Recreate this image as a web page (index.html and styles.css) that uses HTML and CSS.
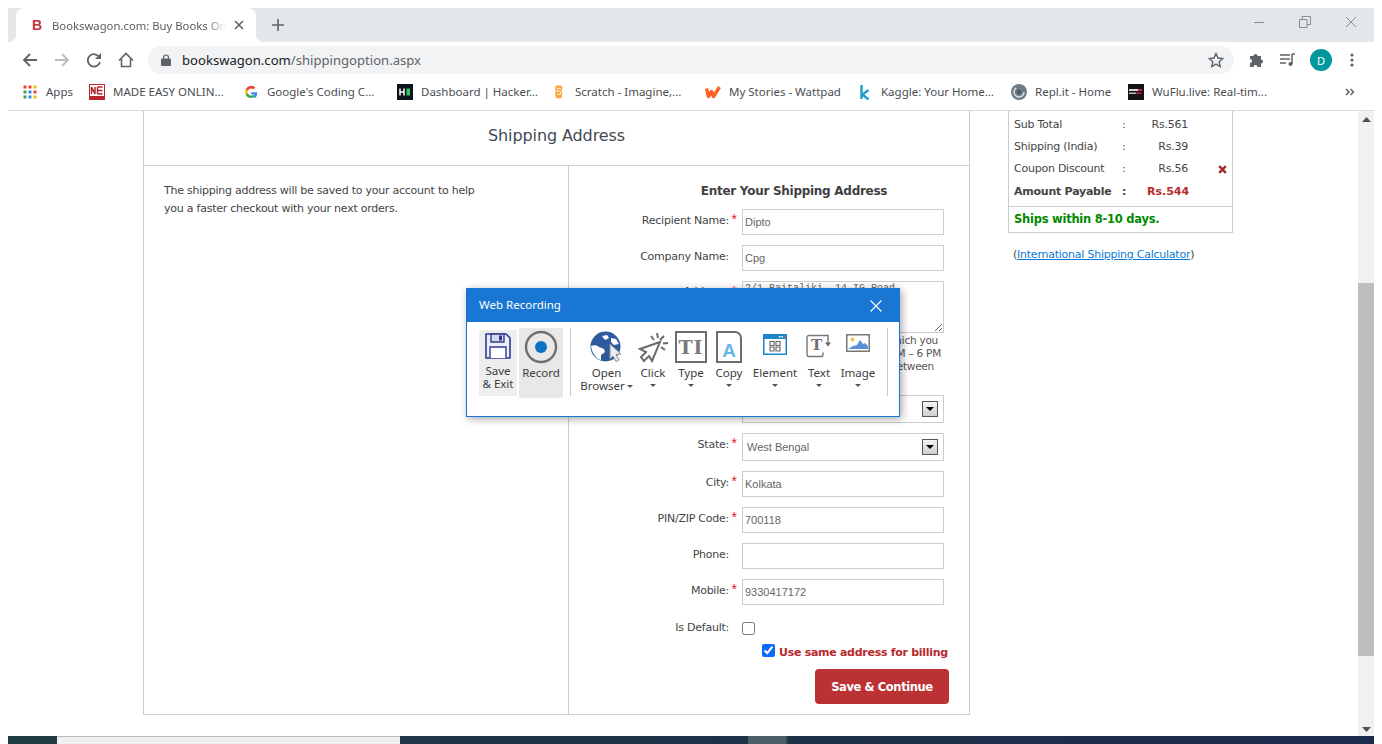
FILE: index.html
```html
<!DOCTYPE html>
<html>
<head>
    <title>Bookswagon.com: Buy Books Online</title>
    <link rel="stylesheet" href="styles.css">
</head>
<body>
    <div class="tab-strip">
        <div class="tab">
            <span class="tab-icon">B</span>
            <span class="tab-title">Bookswagon.com: Buy Books Online</span>
            <svg class="tab-close" width="10" height="10" viewBox="0 0 10 10"><path d="M1 1l8 8M9 1l-8 8" stroke="#5f6368" stroke-width="1.6"/></svg>
        </div>
        <svg class="new-tab" width="12" height="12" viewBox="0 0 12 12"><path d="M6 0v12M0 6h12" stroke="#5f6368" stroke-width="1.6"/></svg>
        <div class="window-controls">
            <svg width="12" height="12" viewBox="0 0 12 12"><path d="M1 6.500h10" stroke="#8a8d90"/></svg>
            <svg width="12" height="12" viewBox="0 0 12 12"><path d="M.5 3.500h7.500v8h-7.500zM3 3.500v-3h8.500v8h-3.500" fill="none" stroke="#8a8d90"/></svg>
            <svg width="12" height="12" viewBox="0 0 12 12"><path d="M1 1l10 10M11 1l-10 10" stroke="#8a8d90"/></svg>
        </div>
    </div>

    <div class="toolbar">
        <svg class="nav-icon" width="16" height="16" viewBox="0 0 16 16"><path d="M15 8H2M8 2L2 8l6 6" fill="none" stroke="#5f6368" stroke-width="1.800"/></svg>
        <svg class="nav-icon" width="16" height="16" viewBox="0 0 16 16"><path d="M1 8h13M8 2l6 6-6 6" fill="none" stroke="#b9bcbf" stroke-width="1.800"/></svg>
        <svg class="nav-icon" width="16" height="16" viewBox="0 0 16 16"><path d="M13.500 5.500A6.200 6.200 0 1 0 14 10" fill="none" stroke="#5f6368" stroke-width="1.800"/><path d="M15 1v6H9z" fill="#5f6368"/></svg>
        <svg class="nav-icon" width="16" height="16" viewBox="0 0 16 16"><path d="M1 8.500L8 1.500l7 7M3.500 7v7.500h9V7" fill="none" stroke="#5f6368" stroke-width="1.600"/></svg>
        <div class="omnibox">
            <svg width="10" height="12" viewBox="0 0 10 12"><path d="M2.500 5V3.500a2.500 2.500 0 0 1 5 0V5" fill="none" stroke="#5f6368" stroke-width="1.200"/><rect y="4.500" width="10" height="7.500" rx="1" fill="#5f6368"/></svg>
            <span class="url">bookswagon.com<span class="url-path">/shippingoption.aspx</span></span>
            <svg class="star" width="16" height="16" viewBox="0 0 16 16"><path d="M8 1.500l2 4.500 4.800.5-3.600 3.200 1 4.800L8 12.100l-4.200 2.400 1-4.800L1.200 6.500 6 6z" fill="none" stroke="#5f6368" stroke-width="1.400"/></svg>
        </div>
        <svg class="puzzle" width="16" height="16" viewBox="0 0 16 16"><path d="M1 5h3.500a2 2 0 1 1 4 0H12v3.500a2 2 0 1 1 0 4V16H8.500a2 2 0 1 0-4 0H1v-4a2 2 0 1 0 0-4z" fill="#5f6368" transform="translate(0 -1)"/></svg>
        <svg class="queue" width="16" height="14" viewBox="0 0 16 14"><path d="M0 2h10M0 6h10M0 10h6" stroke="#5f6368" stroke-width="1.400"/><path d="M12 1h3M12 1v10" stroke="#5f6368" stroke-width="1.500"/><circle cx="10.500" cy="11" r="2" fill="#5f6368"/></svg>
        <span class="avatar">D</span>
        <svg class="dots" width="4" height="14" viewBox="0 0 4 14"><circle cx="2" cy="2" r="1.600" fill="#5f6368"/><circle cx="2" cy="7" r="1.600" fill="#5f6368"/><circle cx="2" cy="12" r="1.600" fill="#5f6368"/></svg>
    </div>

    <div class="bookmarks">
        <div class="bookmark">
            <svg width="16" height="16" viewBox="0 0 16 16">
                <rect x="1.500" y="1.500" width="3" height="3" fill="#ea4335"/><rect x="6.500" y="1.500" width="3" height="3" fill="#ea4335"/><rect x="11.500" y="1.500" width="3" height="3" fill="#fbbc05"/>
                <rect x="1.500" y="6.500" width="3" height="3" fill="#34a853"/><rect x="6.500" y="6.500" width="3" height="3" fill="#4285f4"/><rect x="11.500" y="6.500" width="3" height="3" fill="#ea4335"/>
                <rect x="1.500" y="11.500" width="3" height="3" fill="#34a853"/><rect x="6.500" y="11.500" width="3" height="3" fill="#4285f4"/><rect x="11.500" y="11.500" width="3" height="3" fill="#fbbc05"/>
            </svg>
            <span>Apps</span>
        </div>
        <div class="bookmark">
            <svg width="16" height="16" viewBox="0 0 16 16"><rect width="16" height="16" fill="#b5262c"/><rect x="1" y="1" width="14" height="11" fill="#fff"/><path d="M2.500 10V3l3.500 7V3M8.500 3h5M8.500 6.500h5M8.500 10h5M8.500 3v7" fill="none" stroke="#b5262c" stroke-width="1.500"/></svg>
            <span>MADE EASY ONLIN...</span>
        </div>
        <div class="bookmark">
            <svg width="16" height="16" viewBox="0 0 16 16">
                <path d="M14 8.200H8.200v2.300h3.300a3.500 3.500 0 0 1-1.300 1.900l2 1.600A6 6 0 0 0 14 8.200z" fill="#4285f4"/>
                <path d="M8.200 14a5.800 5.800 0 0 0 4-1.400l-2-1.600a3.600 3.600 0 0 1-5.400-1.900l-2.100 1.600A6 6 0 0 0 8.200 14z" fill="#34a853"/>
                <path d="M4.800 9.100a3.600 3.600 0 0 1 0-2.300L2.700 5.200a6 6 0 0 0 0 5.500z" fill="#fbbc05"/>
                <path d="M8.200 4.400a3.300 3.300 0 0 1 2.300.9l1.800-1.800A6 6 0 0 0 2.700 5.200l2.100 1.600a3.600 3.600 0 0 1 3.400-2.400z" fill="#ea4335"/>
            </svg>
            <span>Google's Coding C...</span>
        </div>
        <div class="bookmark">
            <svg width="16" height="16" viewBox="0 0 16 16"><rect width="16" height="16" fill="#0e141e"/><path d="M3 4.500v7M7 4.500v7M3 8h4" stroke="#fff" stroke-width="1.500"/><rect x="9.500" y="4.500" width="3.500" height="7" fill="#2ec866"/></svg>
            <span>Dashboard | Hacker...</span>
        </div>
        <div class="bookmark">
            <svg width="16" height="16" viewBox="0 0 16 16"><path d="M5 1.500h5.500l1 2.500-.8 2.500.8 3-1 4.500-3 .5-2.500-.5-1-3.500.8-3-.8-3z" fill="#f9a83c"/><path d="M10 4.500H6.500v3h3v3H6" fill="none" stroke="#fde2b6" stroke-width="1.200"/></svg>
            <span>Scratch - Imagine,...</span>
        </div>
        <div class="bookmark">
            <svg width="16" height="16" viewBox="0 0 16 16"><path d="M1.500 4.500l2 8 3-5 2 5 6-9.500" fill="none" stroke="#ff6122" stroke-width="3.400" stroke-linejoin="round"/></svg>
            <span>My Stories - Wattpad</span>
        </div>
        <div class="bookmark">
            <svg width="16" height="16" viewBox="0 0 16 16"><path d="M4.500 1v14M11.500 6L5.500 10.500l6 5" fill="none" stroke="#1f9ccd" stroke-width="2.400"/></svg>
            <span>Kaggle: Your Home...</span>
        </div>
        <div class="bookmark">
            <svg width="16" height="16" viewBox="0 0 16 16"><circle cx="8" cy="8" r="8" fill="#6e7b82"/><circle cx="8" cy="8" r="5" fill="none" stroke="#dfe3e5" stroke-width="1.500" stroke-dasharray="20 12"/><circle cx="8" cy="8" r="2.300" fill="#4e5a61"/></svg>
            <span>Repl.it - Home</span>
        </div>
        <div class="bookmark">
            <svg width="16" height="16" viewBox="0 0 16 16"><rect width="16" height="16" fill="#17111c"/><rect x="1" y="5" width="9" height="2" fill="#d8d8d8"/><rect x="10" y="5" width="4" height="2" fill="#c0303a"/><rect x="1" y="8.500" width="7" height="1.500" fill="#bdbdbd"/><rect x="8" y="8.500" width="5" height="1.500" fill="#b0303a"/></svg>
            <span>WuFlu.live: Real-tim...</span>
        </div>
        <svg class="more" width="10" height="8" viewBox="0 0 10 8"><path d="M1 1l3 3-3 3M5.500 1l3 3-3 3" fill="none" stroke="#5f6368" stroke-width="1.500"/></svg>
    </div>

    <div class="viewport">
        <div class="page">
            <div class="panel">
                <h2 class="panel-title">Shipping Address</h2>
                <div class="panel-body">
                    <div class="note">
                        The shipping address will be saved to your account to help<br>
                        you a faster checkout with your next orders.
                    </div>
                    <div class="address-form">
                        <h3 class="form-title">Enter Your Shipping Address</h3>
                        <div class="row">
                            <label>Recipient Name:</label><span class="req">*</span>
                            <input class="field" type="text" value="Dipto">
                        </div>
                        <div class="row">
                            <label>Company Name:</label><span class="req"></span>
                            <input class="field" type="text" value="Cpg">
                        </div>
                        <div class="row row-tight">
                            <label>Address:</label><span class="req">*</span>
                            <textarea class="field area">2/1 Baitaliki, 14 IG Road</textarea>
                        </div>
                        <p class="hint">
                            <span>Please give an address at which you</span>
                            <span>can take delivery from 10 AM – 6 PM</span>
                            <span>on any working day in between</span>
                        </p>
                        <div class="row">
                            <label>Country:</label><span class="req">*</span>
                            <div class="select"><span>India</span><b class="select-btn"></b></div>
                        </div>
                        <div class="row">
                            <label>State:</label><span class="req">*</span>
                            <div class="select"><span>West Bengal</span><b class="select-btn"></b></div>
                        </div>
                        <div class="row">
                            <label>City:</label><span class="req">*</span>
                            <input class="field" type="text" value="Kolkata">
                        </div>
                        <div class="row">
                            <label>PIN/ZIP Code:</label><span class="req">*</span>
                            <input class="field" type="text" value="700118">
                        </div>
                        <div class="row">
                            <label>Phone:</label><span class="req"></span>
                            <input class="field" type="text">
                        </div>
                        <div class="row">
                            <label>Mobile:</label><span class="req">*</span>
                            <input class="field" type="text" value="9330417172">
                        </div>
                        <div class="row row-check">
                            <label>Is Default:</label><span class="req"></span>
                            <input class="check" type="checkbox">
                        </div>
                        <div class="billing">
                            <input class="check" type="checkbox" checked>
                            <span>Use same address for billing</span>
                        </div>
                        <div class="actions">
                            <button class="save-btn">Save &amp; Continue</button>
                        </div>
                    </div>
                </div>
            </div>

            <div class="sidebar">
                <div class="summary">
                    <div class="totals">
                        <span>Sub Total</span><span>:</span><span class="amount">Rs.561</span><span></span>
                        <span>Shipping (India)</span><span>:</span><span class="amount">Rs.39</span><span></span>
                        <span>Coupon Discount</span><span>:</span><span class="amount">Rs.56</span>
                        <svg class="remove" width="9" height="9" viewBox="0 0 9 9"><path d="M1.200 1.200l6.600 6.600M7.800 1.200L1.200 7.800" stroke="#a5282c" stroke-width="2.400"/></svg>
                        <strong>Amount Payable</strong><strong>:</strong><strong class="amount payable">Rs.544</strong><span></span>
                    </div>
                    <div class="ships">Ships within 8-10 days.</div>
                </div>
                <p class="calc">(<a href="#">International Shipping Calculator</a>)</p>
            </div>
        </div>

        <div class="scrollbar">
            <svg width="9" height="5" viewBox="0 0 9 5"><path d="M4.500 0l4.500 5H0z" fill="#505050"/></svg>
            <div class="thumb"></div>
            <svg width="9" height="5" viewBox="0 0 9 5"><path d="M0 0h9L4.500 5z" fill="#505050"/></svg>
        </div>

        <div class="recorder">
            <div class="recorder-head">
                <span>Web Recording</span>
                <svg width="12" height="12" viewBox="0 0 12 12"><path d="M.5.500l11 11M11.500.500l-11 11" stroke="#fff" stroke-width="1.100"/></svg>
            </div>
            <div class="recorder-tools">
                <div class="tool tool-save">
                    <svg width="26" height="26" viewBox="0 0 26 26"><path d="M1 1h20l4 4v20H1z" fill="#eceef8" stroke="#2f3a8f" stroke-width="1.600"/><path d="M6 1h13v8H6z" fill="#d5d9ee" stroke="#2f3a8f" stroke-width="1.400"/><rect x="14" y="2.500" width="3" height="5" fill="#2f3a8f"/><path d="M5 25V14h16v11" fill="#fff" stroke="#2f3a8f" stroke-width="1.400"/></svg>
                    <span>Save<br>&amp; Exit</span>
                </div>
                <div class="tool tool-record">
                    <svg width="34" height="34" viewBox="0 0 34 34"><circle cx="17" cy="17" r="15" fill="none" stroke="#6f6f6f" stroke-width="2.400"/><circle cx="17" cy="17" r="6" fill="#0a72c4"/></svg>
                    <span>Record</span>
                </div>
                <div class="tool-sep"></div>
                <div class="tool tool-open">
                    <svg width="34" height="32" viewBox="0 0 34 32">
                        <circle cx="15.500" cy="15.500" r="15" fill="#2f5a9e"/>
                        <path d="M1 15c3-1 6-1 8 1l5 2 1 3-4 3v5c-5-1-9-7-10-14zM12 5l5-1 2 3-4 2zM21 7l5 1 3 5-5 1-3-3z" fill="#fff"/>
                        <path d="M20 13l11 10-5 .5 3 5.500-3 1.500-3-5.500-3 3z" fill="#e9ecef" stroke="#8a8f94"/>
                    </svg>
                    <span>Open<br>Browser<i class="caret caret-inline"></i></span>
                </div>
                <div class="tool tool-click">
                    <svg width="32" height="32" viewBox="0 0 32 32"><path d="M22 12L2 19l6 3-5 5 3 4 5-5 3 5z" fill="#fff" stroke="#6b6b6b" stroke-width="2" transform="translate(1 -1)"/><path d="M20 2l1 5M27 5l-4 4M31 12l-5 .5M14 5l3 4M28 19l-4-3" stroke="#6b6b6b" stroke-width="2"/></svg>
                    <span>Click</span><i class="caret"></i>
                </div>
                <div class="tool tool-type">
                    <div class="type-box">TI</div>
                    <span>Type</span><i class="caret"></i>
                </div>
                <div class="tool tool-copy">
                    <div class="copy-doc">A</div>
                    <span>Copy</span><i class="caret"></i>
                </div>
                <div class="tool tool-element">
                    <svg class="icon-low" width="24" height="21" viewBox="0 0 24 21"><rect width="24" height="21" fill="#1b86c8"/><rect x="1.500" y="5" width="21" height="14.500" fill="#fff"/><rect x="16" y="2" width="1.500" height="1.500" fill="#fff"/><rect x="18.500" y="2" width="1.500" height="1.500" fill="#fff"/><rect x="21" y="2" width="1.500" height="1.500" fill="#e9546b"/><path d="M7 7.500h4v4H7zM13 7.500h4v4h-4zM7 13h4v4H7zM13 13h4v4h-4z" fill="none" stroke="#6b6b6b" stroke-width="1.200"/></svg>
                    <span>Element</span><i class="caret"></i>
                </div>
                <div class="tool tool-text">
                    <div class="text-icon">
                        <svg width="26" height="24" viewBox="0 0 26 24"><path d="M15 1.500H3a2 2 0 0 0-2 2v17a2 2 0 0 0 2 2h12a2 2 0 0 0 2-2v-2" fill="none" stroke="#777" stroke-width="1.400"/><path d="M15 1.500h7V9" fill="none" stroke="#777" stroke-width="1.400"/><path d="M19 8.500h6l-3 4z" fill="#666"/></svg>
                        <span class="text-t">T</span>
                    </div>
                    <span>Text</span><i class="caret"></i>
                </div>
                <div class="tool tool-image">
                    <svg class="icon-low" width="24" height="18" viewBox="0 0 24 18"><rect x=".75" y=".75" width="22.500" height="16.500" fill="#fff" stroke="#777" stroke-width="1.500"/><circle cx="6.500" cy="5.500" r="2" fill="#f2c14e"/><path d="M2 15l5-3 4-1 3-5 3 4 2-1 3 3v3z" fill="#5b8fd3"/></svg>
                    <span>Image</span><i class="caret"></i>
                </div>
                <div class="tool-sep tool-sep-end"></div>
            </div>
        </div>
    </div>

    <div class="taskbar">
        <div class="task-start"></div>
        <div class="task-search"></div>
        <div class="task-gap"></div>
        <div class="task-active"></div>
        <div class="task-clock"><span>THU</span><span>9:53 AM</span></div>
    </div>
</body>
</html>
```

FILE: styles.css
```css
html {
    background: #fff;
}

body {
    margin: 8px 8px 0;
    height: 736px;
    overflow: hidden;
    font-family: "Noto Sans", "Open Sans", sans-serif;
    color: #3c4043;
    display: flex;
    flex-direction: column;
}

/* browser chrome */
.tab-strip {
    height: 34px;
    flex: none;
    background: #e4e7ea;
    display: flex;
    align-items: center;
    padding-left: 8px;
}

.tab {
    position: relative;
    width: 240px;
    height: 34px;
    background: #fff;
    border-radius: 8px 8px 0 0;
    display: flex;
    align-items: center;
    padding: 0 12px 0 16px;
    box-sizing: border-box;
    font-size: 11.300px;
    color: #5a5d61;
}

.tab::before,
.tab::after {
    content: "";
    position: absolute;
    bottom: 0;
    width: 8px;
    height: 8px;
}

.tab::before {
    left: -8px;
    background: radial-gradient(circle at 0 0, transparent 8px, #fff 8.500px);
}

.tab::after {
    right: -8px;
    background: radial-gradient(circle at 100% 0, transparent 8px, #fff 8.500px);
}

.tab-icon {
    width: 10px;
    margin-right: 10px;
    font: bold 14px "Liberation Sans", sans-serif;
    color: #c0353a;
}

.tab-title {
    flex: 1;
    white-space: nowrap;
    overflow: hidden;
    -webkit-mask-image: linear-gradient(to right, #000 88%, transparent);
    mask-image: linear-gradient(to right, #000 88%, transparent);
}

.tab-close {
    margin-left: 7px;
}

.new-tab {
    margin-left: 16px;
}

.window-controls {
    margin-left: auto;
    width: 104px;
    display: flex;
    justify-content: space-between;
    padding-right: 17px;
    margin-top: -6px;
}

.toolbar {
    height: 36px;
    flex: none;
    display: flex;
    align-items: center;
    padding-left: 14px;
    box-sizing: border-box;
}

.nav-icon {
    margin-right: 16px;
}

.omnibox {
    width: 1086px;
    height: 28px;
    margin-left: -2px;
    background: #f1f3f4;
    border-radius: 14px;
    display: flex;
    align-items: center;
    padding: 0 10px 0 13px;
    box-sizing: border-box;
}

.url {
    margin-left: 11px;
    font-size: 13.100px;
    color: #202124;
}

.url-path {
    color: #5f6368;
}

.star {
    margin-left: auto;
}

.puzzle {
    margin-left: 15px;
}

.queue {
    margin-left: 15px;
}

.avatar {
    width: 22px;
    height: 22px;
    margin-left: 14px;
    border-radius: 50%;
    background: #00979d;
    color: #fff;
    font-size: 11px;
    display: flex;
    align-items: center;
    justify-content: center;
}

.dots {
    margin-left: 18px;
}

.bookmarks {
    height: 33px;
    flex: none;
    box-sizing: border-box;
    border-bottom: 1px solid #dcdcdc;
    padding: 0 0 5px 14px;
    display: grid;
    grid-template-columns: 67px 154px 154px 154px 154px 152px 154px 117px 217px 16px;
    align-items: center;
    font-size: 11.500px;
    color: #4a4d51;
}

.bookmark {
    display: flex;
    align-items: center;
    gap: 8px;
    white-space: nowrap;
}

.bookmark svg {
    flex: none;
}

/* page content */
.viewport {
    position: relative;
    height: 625px;
    flex: none;
    display: flex;
    overflow: hidden;
    font-family: "DejaVu Sans", sans-serif;
    font-size: 11px;
    letter-spacing: -0.24px;
    color: #444;
}

.page {
    flex: 1;
    display: flex;
    padding-left: 135px;
    align-items: flex-start;
}

.panel {
    width: 827px;
    height: 604px;
    box-sizing: border-box;
    border: 1px solid #ccc;
    border-top: none;
    display: flex;
    flex-direction: column;
}

.panel-title {
    height: 55px;
    flex: none;
    box-sizing: border-box;
    margin: 0;
    border-bottom: 1px solid #ccc;
    text-align: center;
    font-weight: normal;
    font-size: 16px;
    letter-spacing: -0.1px;
    line-height: 50px;
    color: #3f4a54;
}

.panel-body {
    flex: 1;
    display: flex;
}

.note {
    width: 425px;
    box-sizing: border-box;
    border-right: 1px solid #ccc;
    padding: 16px 0 0 20px;
    line-height: 18px;
}

.address-form {
    flex: 1;
    box-sizing: border-box;
    position: relative;
}

.form-title {
    margin: 17px 0 10px;
    padding-left: 50px;
    text-align: center;
    font-size: 12px;
    letter-spacing: -0.28px;
    line-height: 16px;
    color: #3f4043;
}

.row {
    display: grid;
    grid-template-columns: 160px 13px 202px;
    margin-bottom: 10px;
}

.row-tight {
    margin-bottom: 0;
}

.row label {
    text-align: right;
    line-height: 24px;
}

.row-tight label {
    line-height: 21px;
}

.req {
    padding-left: 2.500px;
    color: #e02020;
    font: 14px/20px "Liberation Sans", sans-serif;
}

.field {
    width: 202px;
    height: 26px;
    margin: 0;
    padding: 0 2px;
    box-sizing: border-box;
    border: 1px solid #ccc;
    font: 11px "Liberation Sans", sans-serif;
    letter-spacing: 0;
    color: #666;
    outline: none;
}

.area {
    height: 52px;
    padding-top: 1px;
    font: 10px "Liberation Mono", monospace;
}

.hint {
    margin: 1px 0 22px 173px;
    width: 202px;
    line-height: 13px;
    font-size: 10.500px;
    white-space: nowrap;
    color: #555;
}

.hint span {
    display: block;
    text-align: right;
}

.hint span:nth-child(1) {
    padding-right: 6px;
}

.hint span:nth-child(2) {
    padding-right: 3px;
}

.hint span:nth-child(3) {
    padding-right: 10px;
}

.select {
    width: 202px;
    height: 28px;
    box-sizing: border-box;
    border: 1px solid #ccc;
    display: flex;
    align-items: center;
    justify-content: space-between;
    padding: 0 5px 0 4px;
    font: 11px "Liberation Sans", sans-serif;
    letter-spacing: 0;
    color: #666;
}

.select-btn {
    position: relative;
    width: 16px;
    height: 16px;
    box-sizing: border-box;
    border: 1px solid #555;
    background: linear-gradient(#f4f4f4, #cfcfcf);
}

.select-btn::after {
    content: "";
    position: absolute;
    left: 3px;
    top: 5px;
    border: 4px solid transparent;
    border-top: 4px solid #000;
    border-bottom: none;
}

.row-check {
    align-items: center;
    margin-bottom: 12px;
    height: 16px;
    margin-top: 11px;
}

.check {
    width: 13px;
    height: 13px;
    margin: 0;
    accent-color: #0a6cff;
}

.billing {
    display: flex;
    align-items: flex-start;
    gap: 4px;
    padding-left: 193px;
    white-space: nowrap;
    color: #b8282c;
    font-weight: bold;
    font-size: 11px;
    letter-spacing: -0.28px;
    line-height: 16px;
}

.billing span {
    margin-top: 1px;
}

.actions {
    margin-top: 8px;
    padding-left: 246px;
}

.save-btn {
    width: 134px;
    height: 35px;
    border: none;
    border-radius: 4px;
    background: #bb3234;
    color: #fff;
    font: bold 11.500px "DejaVu Sans", sans-serif;
    letter-spacing: -0.4px;
}

.sidebar {
    width: 225px;
    margin-left: 38px;
}

.summary {
    box-sizing: border-box;
    border: 1px solid #ccc;
    border-top: none;
}

.totals {
    display: grid;
    grid-template-columns: 108px 25px 41px 1fr;
    grid-template-rows: 22px 22px 22px 24px;
    align-items: center;
    padding: 3px 0 2px 5px;
    white-space: nowrap;
    line-height: 22px;
}

.amount {
    text-align: right;
}

.payable {
    color: #b8282c;
    letter-spacing: 0;
}

.remove {
    justify-self: end;
    margin-right: 5px;
}

.ships {
    border-top: 1px solid #ccc;
    height: 25px;
    padding-left: 5px;
    line-height: 25px;
    font-weight: bold;
    font-size: 11.500px;
    color: #008a00;
}

.calc {
    margin: 15px 0 0 5px;
    white-space: nowrap;
}

.calc a {
    color: #0a7bd6;
}

.scrollbar {
    width: 16px;
    flex: none;
    background: #f1f1f1;
    display: flex;
    flex-direction: column;
    align-items: center;
}

.scrollbar svg {
    flex: none;
    margin-top: 6px;
}

.thumb {
    width: 100%;
    height: 373px;
    margin-top: 161px;
    background: #bdbdbd;
    margin-bottom: 65px;
}

/* recorder dialog floats over the page */
.recorder {
    position: absolute;
    left: 458px;
    top: 177px;
    width: 434px;
    height: 129px;
    box-sizing: border-box;
    background: #fff;
    border: 1px solid #1976d2;
    box-shadow: 2px 2px 8px rgba(0, 0, 0, 0.35);
    font-family: "Noto Sans", sans-serif;
    font-size: 11.500px;
    letter-spacing: 0;
    color: #3c3c3c;
}

.recorder-head {
    height: 33px;
    background: #1976d2;
    color: #fff;
    display: flex;
    align-items: center;
    justify-content: space-between;
    padding: 0 17px 0 12px;
    font-size: 11.500px;
}

.recorder-head span {
    margin-bottom: 2px;
}

.recorder-tools {
    display: flex;
    align-items: flex-start;
    padding: 6px 0 0 12px;
}

.tool {
    display: flex;
    flex-direction: column;
    align-items: center;
    text-align: center;
    line-height: 13px;
    flex: none;
    white-space: nowrap;
}

.tool svg {
    flex: none;
}

.tool-save {
    width: 38px;
    height: 66px;
    margin-top: 2px;
    padding-top: 3px;
    box-sizing: border-box;
    background: #eee;
}

.tool-save span {
    margin-top: 5px;
}

.tool-record {
    width: 44px;
    height: 70px;
    margin-left: 2px;
    padding-top: 2px;
    box-sizing: border-box;
    background: #e8e8e8;
}

.tool-record span {
    margin-top: 2px;
}

.tool-sep {
    width: 1px;
    height: 68px;
    margin: 0 10px 0 7px;
    background: #c8c8c8;
    flex: none;
}

.tool-sep-end {
    margin: 0 0 0 9px;
}

.tool-open,
.tool-click,
.tool-type,
.tool-copy,
.tool-element,
.tool-text,
.tool-image {
    padding-top: 3px;
    height: 70px;
    box-sizing: border-box;
}

.tool-open {
    width: 51px;
}

.tool-click {
    width: 42px;
}

.tool-type {
    width: 34px;
}

.tool-copy {
    width: 42px;
}

.tool-element {
    width: 50px;
}

.tool-text {
    width: 38px;
}

.tool-image {
    width: 40px;
}

.tool-open span,
.tool-click span {
    margin-top: 3px;
}

.icon-low {
    margin: 3px 0 11px;
}

.tool-image .icon-low {
    margin-bottom: 14px;
}

.type-box {
    width: 32px;
    height: 32px;
    box-sizing: border-box;
    border: 2px solid #6e6e6e;
    margin-bottom: 3px;
    font: bold 19px/28px "DejaVu Serif", serif;
    color: #7a7a7a;
    letter-spacing: 1px;
}

.copy-doc {
    width: 26px;
    height: 32px;
    box-sizing: border-box;
    border: 2px solid #6e6e6e;
    border-top-right-radius: 7px;
    margin-bottom: 3px;
    padding-top: 7px;
    font: bold 19px/21px "Liberation Sans", sans-serif;
    color: #6cb4e8;
}

.text-icon {
    position: relative;
    height: 24px;
    margin: 3px 0 8px;
}

.text-t {
    position: absolute;
    left: 5px;
    top: 3px;
    font: bold 15px/17px "DejaVu Serif", serif;
    color: #6e6e6e;
}

.caret {
    width: 0;
    height: 0;
    margin-top: 5px;
    border: 3px solid transparent;
    border-top: 3px solid #555;
    border-bottom: none;
}

.caret-inline {
    display: inline-block;
    margin: 0 0 2px 2px;
}

/* bottom sliver of the desktop taskbar */
.taskbar {
    height: 8px;
    flex: none;
    overflow: hidden;
    display: flex;
    background: linear-gradient(to right, #1f3b42, #1c2a4c);
}

.task-start {
    width: 49px;
}

.task-search {
    width: 343px;
    background: #f0f0f0;
    border-top: 1px solid #bbb;
}

.task-gap {
    width: 348px;
}

.task-active {
    width: 38px;
    background: #4d5f68;
    border-right: 2px solid #33464e;
}

.task-clock {
    margin-left: 438px;
    display: flex;
    gap: 19px;
    color: #fff;
    font: 11px/11px "Noto Sans", sans-serif;
    padding-top: 6px;
}
```
